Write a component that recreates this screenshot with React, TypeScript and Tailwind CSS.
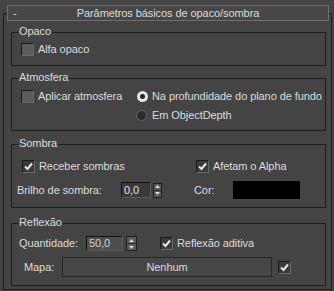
import * as React from 'react';

const Check = ({ checked = false }: { checked?: boolean }) => (
  <span
    className={`flex h-[13px] w-[13px] shrink-0 items-center justify-center border border-t-[#1a1a1a] border-l-[#1a1a1a] border-r-[#6a6a6a] border-b-[#6a6a6a] ${
      checked ? 'bg-[#3a3a3a]' : 'bg-[#5c5c5c]'
    }`}
  >
    {checked && (
      <svg width="9" height="9" viewBox="0 0 9 9">
        <path d="M1 4.5 L3.5 7 L8 1.5" fill="none" stroke="#e6e6e6" strokeWidth="2" />
      </svg>
    )}
  </span>
);

const Radio = ({ selected = false }: { selected?: boolean }) => (
  <span
    className={`flex h-[11px] w-[11px] shrink-0 items-center justify-center rounded-full ${
      selected ? 'bg-[#e4e4e4]' : 'bg-[#2a2a2a] border border-[#6a6a6a]'
    }`}
  >
    {selected && <span className="h-[5px] w-[5px] rounded-full bg-[#262626]" />}
  </span>
);

const Spin = ({ w }: { w: string }) => (
  <span className={`flex h-[15px] ${w} shrink-0 flex-col border border-[#1e1e1e] bg-[#5a5a5a]`}>
    <span className="flex flex-1 items-center justify-center border-b border-[#2a2a2a]">
      <svg width="5" height="3" viewBox="0 0 5 3">
        <path d="M0 3 L2.5 0 L5 3 Z" fill="#d8d8d8" />
      </svg>
    </span>
    <span className="flex flex-1 items-center justify-center">
      <svg width="5" height="3" viewBox="0 0 5 3">
        <path d="M0 0 L2.5 3 L5 0 Z" fill="#d8d8d8" />
      </svg>
    </span>
  </span>
);

const Group = ({
  title,
  h,
  mt,
  children,
}: {
  title: string;
  h: string;
  mt: string;
  children?: React.ReactNode;
}) => (
  <div className={`relative ml-[7px] w-[315px] border border-[#1e1e1e] ${h} ${mt}`}>
    <span className="absolute -top-[9px] left-[6px] bg-[#444444] px-[1px] leading-[14px]">
      {title}
    </span>
    {children}
  </div>
);

export default function App() {
  return (
    <div
      className="h-[291px] w-[334px] overflow-hidden bg-[#444444] pt-[13px] text-[11px] tracking-[-0.08px] text-[#dcdcdc]"
      style={{ fontFamily: '"Liberation Sans", Arial, sans-serif' }}
    >
      <div className="ml-[3px] h-[277px] w-[329px] border border-[#1e1e1e]">
        {/* rollout title */}
        <div className="relative -mt-[9px] ml-[3px] flex h-[16px] w-[322px] items-center border border-[#6e6e6e] bg-[#474747]">
          <span className="absolute left-[5px] top-[-1px]">-</span>
          <span className="w-full text-center leading-[14px]">Parâmetros básicos de opaco/sombra</span>
        </div>

        <Group title="Opaco" h="h-[34px]" mt="mt-[11px]">
          <div className="mt-[10px] flex h-[13px] items-center gap-[4px] pl-[9px]">
            <Check />
            <span>Alfa opaco</span>
          </div>
        </Group>

        <Group title="Atmosfera" h="h-[53px]" mt="mt-[12px]">
          <div className="mt-[8px] flex h-[19px] items-center pl-[9px]">
            <div className="flex w-[116px] items-center gap-[4px]">
              <Check />
              <span>Aplicar atmosfera</span>
            </div>
            <Radio selected />
            <span className="ml-[4px]">Na profundidade do plano de fundo</span>
          </div>
          <div className="flex h-[19px] items-center pl-[124px]">
            <Radio />
            <span className="ml-[5px]">Em ObjectDepth</span>
          </div>
        </Group>

        <Group title="Sombra" h="h-[64px]" mt="mt-[13px]">
          <div className="mt-[15px] flex h-[13px] items-center pl-[10px]">
            <div className="flex w-[174px] items-center gap-[4px]">
              <Check checked />
              <span>Receber sombras</span>
            </div>
            <Check checked />
            <span className="ml-[4px]">Afetam o Alpha</span>
          </div>
          <div className="mt-[8px] flex h-[18px] items-center pl-[5px]">
            <span className="w-[104px]">Brilho de sombra:</span>
            <span className="flex h-[16px] w-[30px] items-center border border-t-[#111] border-l-[#111] border-r-[#5a5a5a] border-b-[#5a5a5a] bg-[#3a3a3a] pl-[2px] text-[#e0e0e0]">
              0,0
            </span>
            <span className="ml-[2px]">
              <Spin w="w-[9px]" />
            </span>
            <span className="ml-[32px] w-[39px]">Cor:</span>
            <span className="h-[18px] w-[67px] bg-black" />
          </div>
        </Group>

        <Group title="Reflexão" h="h-[63px]" mt="mt-[15px]">
          <div className="mt-[12px] flex h-[15px] items-center pl-[7px]">
            <span className="w-[67px]">Quantidade:</span>
            <span className="flex h-[15px] w-[37px] items-center border border-t-[#111] border-l-[#111] border-r-[#5a5a5a] border-b-[#5a5a5a] bg-[#4e4e4e] pl-[2px] text-[#d0d0d0]">
              50,0
            </span>
            <span className="ml-[3px]">
              <Spin w="w-[11px]" />
            </span>
            <span className="ml-[23px] flex items-center gap-[4px]">
              <Check checked />
              <span>Reflexão aditiva</span>
            </span>
          </div>
          <div className="mt-[6px] flex h-[20px] items-center pl-[12px]">
            <span className="w-[38px]">Mapa:</span>
            <span className="flex h-[20px] w-[210px] items-center justify-center border border-[#262626] bg-[#474747]">
              Nenhum
            </span>
            <span className="ml-[6px]">
              <Check checked />
            </span>
          </div>
        </Group>
      </div>
    </div>
  );
}
